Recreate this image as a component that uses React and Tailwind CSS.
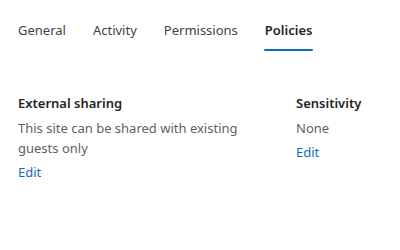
export default function App() {
  const tabs = ["General", "Activity", "Permissions", "Policies"];
  return (
    <div className="w-[400px] h-[250px] bg-white overflow-hidden" style={{ fontFamily: '"Segoe UI", "Noto Sans", "Open Sans", sans-serif' }}>
      <div className="flex pl-[18px] pt-[19px] gap-[27px]">
        {tabs.map((t) => (
          <div key={t} className="flex flex-col items-stretch">
            <span className={`text-[13px] leading-[22px] ${t === "Policies" ? "font-semibold text-[#242424]" : "text-[#424242]"}`}>{t}</span>
            <div className={`mt-[8px] h-[2px] -mx-[1px] rounded-full ${t === "Policies" ? "bg-[#0f6cbd]" : "bg-transparent"}`} />
          </div>
        ))}
      </div>
      <div className="flex pl-[18px] pt-[42px]">
        <div className="w-[278px] pr-[40px] flex flex-col">
          <div className="text-[13px] leading-[20px] font-semibold text-[#242424]">External sharing</div>
          <div className="mt-[5px] text-[13px] leading-[20px] text-[#616161]">This site can be shared with existing guests only</div>
          <div className="mt-[4px] text-[13px] leading-[20px] text-[#0f6cbd]">Edit</div>
        </div>
        <div className="flex flex-col">
          <div className="text-[13px] leading-[20px] font-semibold text-[#242424]">Sensitivity</div>
          <div className="mt-[5px] text-[13px] leading-[20px] text-[#616161]">None</div>
          <div className="mt-[4px] text-[13px] leading-[20px] text-[#0f6cbd]">Edit</div>
        </div>
      </div>
    </div>
  );
}
